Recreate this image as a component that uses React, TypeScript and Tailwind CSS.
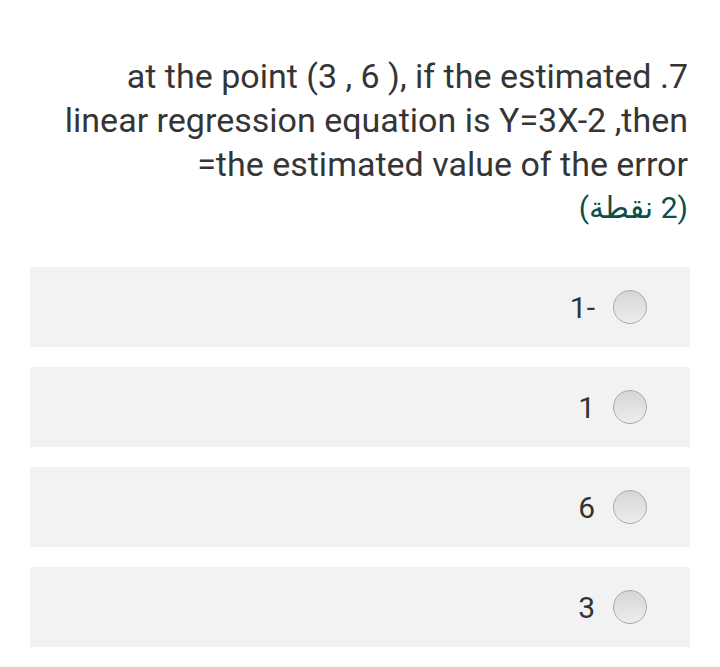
export default function App() {
  const options = ["1-", "1", "6", "3"];
  return (
    <div className="min-h-screen bg-white font-['Roboto',sans-serif]">
      <div className="px-[30px] pt-[54px]">
        <div className="pr-[2px] text-right text-[34px] leading-[44px] text-[#353535]">
          <div>at the point (3 , 6 ), if the estimated .7</div>
          <div>linear regression equation is Y=3X-2 ,then</div>
          <div>=the estimated value of the error</div>
          <div dir="rtl" className="text-[30px] leading-[44px] text-[#0b4f48] font-['Roboto','DejaVu_Sans',sans-serif]">
            (2 نقطة)
          </div>
        </div>

        <div className="mt-[37px] flex flex-col gap-5">
          {options.map((o) => (
            <div key={o} className="flex h-20 items-center justify-end gap-[18px] bg-[#f2f2f2] pr-[43px]">
              <span className="text-[30px] text-[#333333]">{o}</span>
              <span className="h-[34px] w-[34px] rounded-full border border-[#a9a9a9] bg-gradient-to-b from-[#d6d6d6] to-[#ededed]" />
            </div>
          ))}
        </div>
      </div>
    </div>
  );
}
